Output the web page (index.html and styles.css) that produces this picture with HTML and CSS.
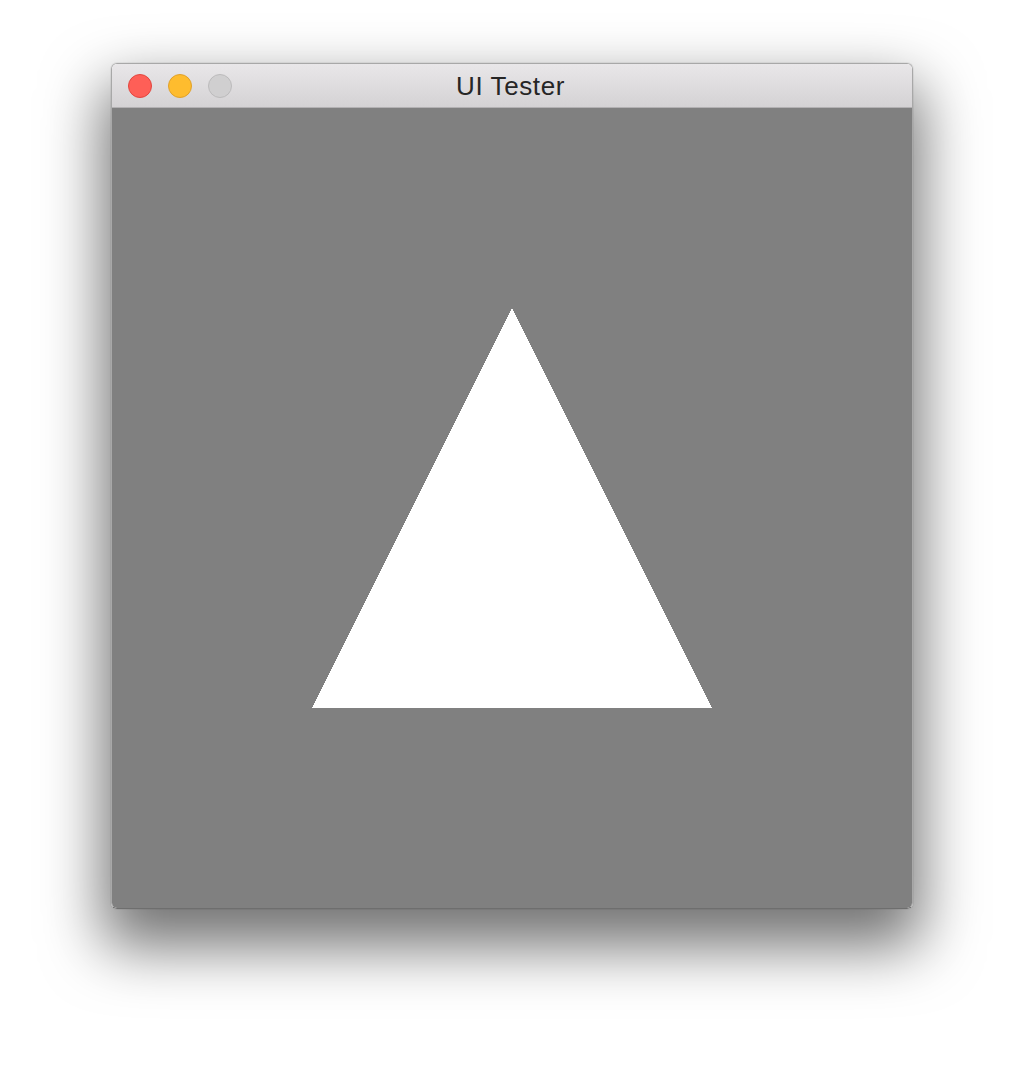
FILE: index.html
```html
<!DOCTYPE html>
<html>
<head>
<meta charset="utf-8">
<link rel="stylesheet" href="styles.css">
</head>
<body>
<div class="window">
  <div class="titlebar">
    <div class="lights">
      <span class="light red"></span>
      <span class="light yellow"></span>
      <span class="light gray"></span>
    </div>
    <div class="title">UI Tester</div>
  </div>
  <div class="content">
    <svg width="800" height="800" viewBox="0 0 800 800" shape-rendering="crispEdges">
      <polygon points="400,200 200,600 600,600" fill="#ffffff"/>
    </svg>
  </div>
</div>
</body>
</html>
```
FILE: styles.css
```css
html, body {
  margin: 0;
  padding: 0;
  background: #ffffff;
}
body {
  padding-top: 63px;
  height: 1068px;
  box-sizing: border-box;
  overflow: hidden;
}
.window {
  width: 800px;
  margin: 0 auto;
  border: 1px solid #a8a8a8;
  border-bottom-color: #6e6e6e;
  border-radius: 6px;
  overflow: hidden;
  box-shadow: 0 30px 60px 8px rgba(0,0,0,0.55), 0 0 0 1px rgba(0,0,0,0.05);
}
.titlebar {
  position: relative;
  height: 43px;
  background: linear-gradient(#e9e7e9, #d4d2d4);
  border-bottom: 1px solid #b3b1b3;
  display: flex;
  align-items: center;
  justify-content: center;
}
.lights {
  position: absolute;
  left: 16px;
  top: 10px;
  display: flex;
  gap: 16px;
}
.light {
  width: 24px;
  height: 24px;
  border-radius: 50%;
  box-sizing: border-box;
  display: block;
}
.red { background: #fe5f57; border: 1px solid #e2463f; }
.yellow { background: #febc2e; border: 1px solid #e0a12a; }
.gray { background: #d0cfd0; border: 1px solid #bcbbbc; }
.title {
  font-family: "Liberation Sans", Arial, sans-serif;
  font-size: 26px;
  letter-spacing: 0.6px;
  color: #262626;
  line-height: 43px;
  padding-top: 2px;
  padding-right: 3px;
}
.content {
  height: 800px;
  background: #808080;
}
.content svg {
  display: block;
}
```
